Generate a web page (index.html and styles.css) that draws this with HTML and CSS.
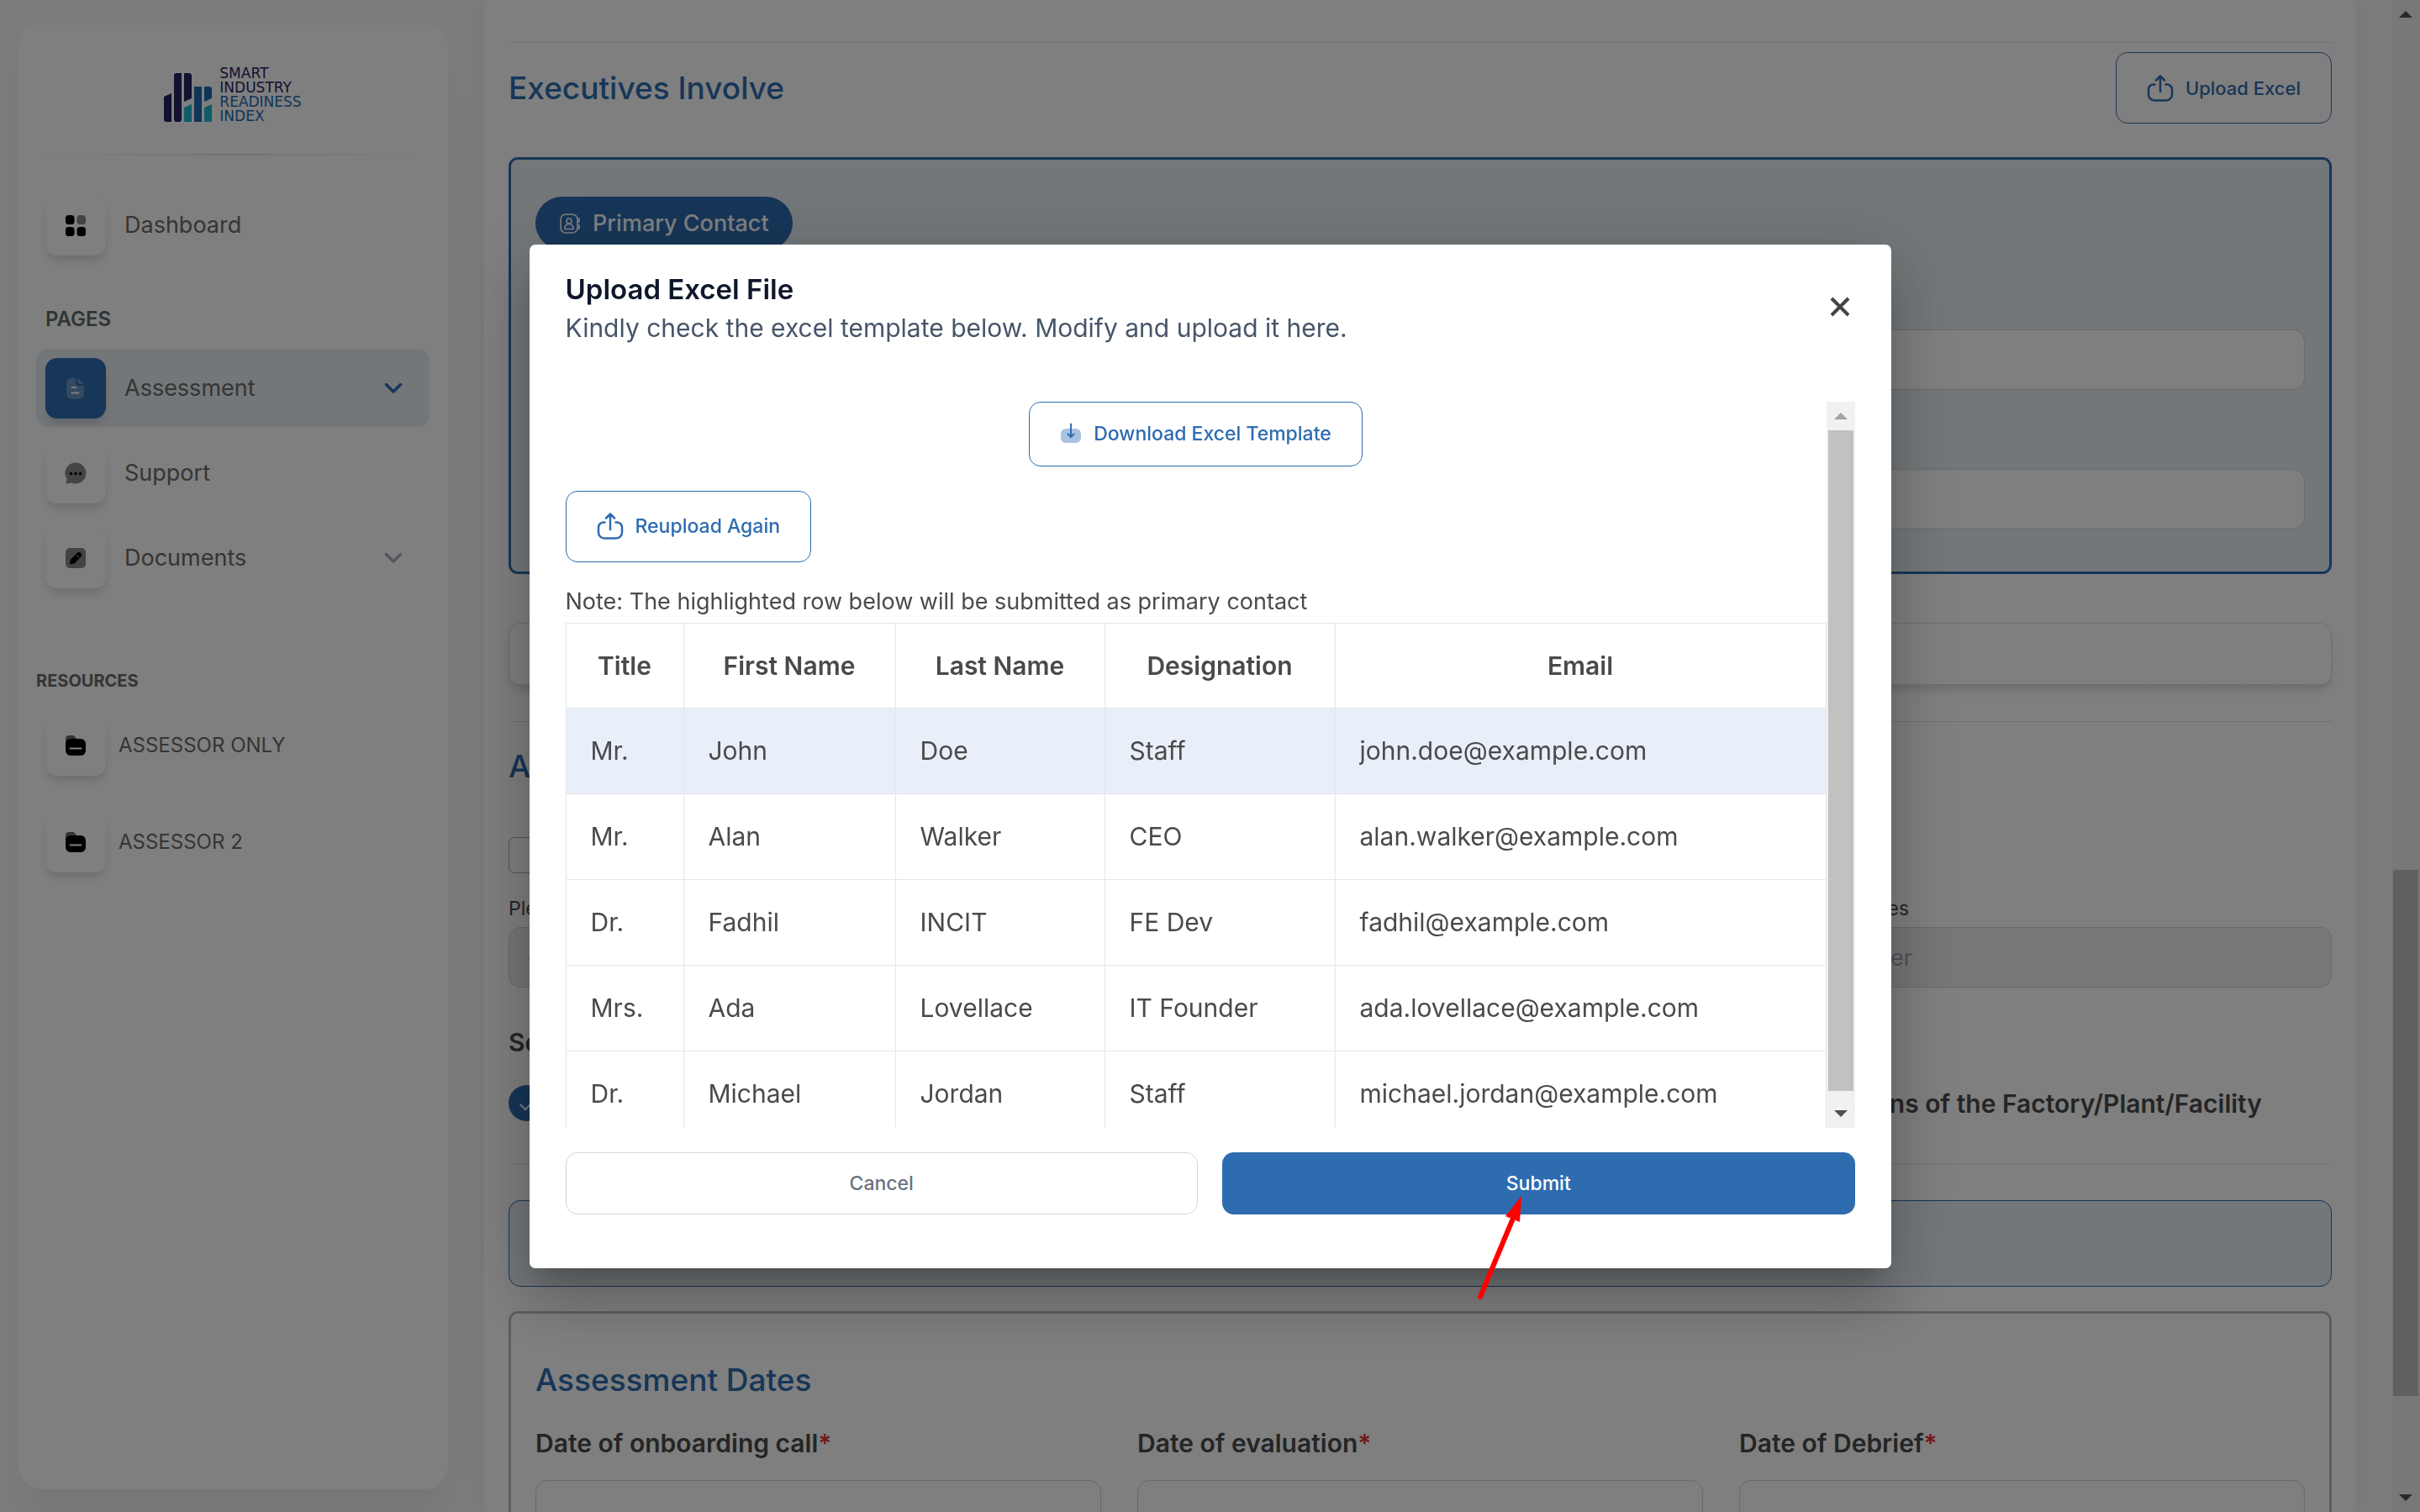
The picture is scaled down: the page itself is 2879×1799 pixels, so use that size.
FILE: index.html
```html
<!DOCTYPE html>
<html lang="en">

<head>
    <meta charset="UTF-8">
    <meta name="viewport" content="width=device-width, initial-scale=1.0">
    <title>Smart Industry Readiness Index - Assessment</title>
    <link rel="stylesheet" href="styles.css">
</head>

<body>
    <!-- shared icons -->
    <svg class="sprite" aria-hidden="true">
        <symbol id="icon-upload" viewBox="0 0 32 32">
            <path d="M9.500 11.500H8a6 6 0 0 0-6 6v6a7 7 0 0 0 7 7h14a7 7 0 0 0 7-7v-6a6 6 0 0 0-6-6h-1.500M16 20V2M11 6.500L16 1.500l5 5" fill="none" stroke="currentColor" stroke-width="2.500" stroke-linecap="round" stroke-linejoin="round"/>
        </symbol>
        <symbol id="icon-chevron" viewBox="0 0 22 14">
            <path d="M2.500 2.500L11 11l8.500-8.500" fill="none" stroke="currentColor" stroke-width="3.500" stroke-linecap="round" stroke-linejoin="round"/>
        </symbol>
        <symbol id="icon-folder" viewBox="0 0 26 26">
            <path d="M1 11V5a4 4 0 0 1 4-4h4.500c2 0 3.500 2 5 5z" fill="#666"/>
            <rect x="1" y="5" width="24" height="20" rx="6"/>
            <path d="M6.500 16.500h13" stroke="#fff" stroke-width="2" stroke-linecap="round"/>
        </symbol>
    </svg>

    <div class="page">
        <aside class="sidebar">
            <a class="logo" href="#">
                <svg class="logo-mark" viewBox="0 0 58 58" aria-hidden="true">
                    <path d="M0 28l9-4v34H3a3 3 0 0 1-3-3zM12 3a3 3 0 0 1 3-3h6v55a3 3 0 0 1-3 3h-3a3 3 0 0 1-3-3zM24 0h6a3 3 0 0 1 3 3v27l-9 4z" fill="#25225f"/>
                    <path d="M36 16h9v42h-9zM48 16h6a3 3 0 0 1 3 3v11l-9 4z" fill="#206ab0"/>
                    <path d="M24 41l9-4v21h-9zM48 41l9-4v21h-9z" fill="#1cb8d4"/>
                </svg>
                <span class="logo-text">SMART<br>INDUSTRY<br><span class="logo-light">READINESS<br>INDEX</span></span>
            </a>
            <hr class="fade-line">

            <nav>
                <a class="nav-item" href="#">
                    <span class="tile"><svg viewBox="0 0 26 26"><rect x="1" y="1" width="10.500" height="11" rx="3.500"/><rect x="14.500" y="1" width="10.500" height="11" rx="3.500" fill="#888"/><rect x="1" y="15" width="10.500" height="11" rx="3.500"/><rect x="14.500" y="15" width="10.500" height="11" rx="3.500"/></svg></span>
                    <span class="nav-text">Dashboard</span>
                </a>
                <h6 class="nav-title">PAGES</h6>
                <a class="nav-item active" href="#">
                    <span class="tile"><svg viewBox="0 0 26 26"><path d="M8 0.500h5V6a4 4 0 0 0 4 4h6v9.500a6 6 0 0 1-6 6H8a6 6 0 0 1-6-6v-13a6 6 0 0 1 6-6z" fill="#6b93c4"/><path d="M15.500 0.500L23 8h-4a3.500 3.500 0 0 1-3.500-3.500z" fill="#6b93c4"/><path d="M8.500 12h5M8.500 18.500h8" stroke="#fff" stroke-width="2" stroke-linecap="round"/></svg></span>
                    <span class="nav-text">Assessment</span>
                    <svg class="chevron"><use href="#icon-chevron"/></svg>
                </a>
                <a class="nav-item" href="#">
                    <span class="tile"><svg viewBox="0 0 26 26"><path d="M13 0.500a12.500 12.500 0 1 1-5 24L1.500 25.500l1-5.500A12.500 12.500 0 0 1 13 0.500z" fill="#888"/><circle cx="7.500" cy="13.500" r="1.700"/><circle cx="13" cy="13.500" r="1.700"/><circle cx="18.500" cy="13.500" r="1.700"/></svg></span>
                    <span class="nav-text">Support</span>
                </a>
                <a class="nav-item" href="#">
                    <span class="tile"><svg viewBox="0 0 26 26"><rect x="1" y="1" width="24" height="24" rx="5" fill="#888"/><path d="M6.500 20l.8-5L15 7.300a2.800 2.800 0 0 1 4 4L11.500 19z" stroke="#000" stroke-linejoin="round"/><path d="M14 9l3.500 3.500" stroke="#888"/></svg></span>
                    <span class="nav-text">Documents</span>
                    <svg class="chevron"><use href="#icon-chevron"/></svg>
                </a>
                <h6 class="nav-title resources">RESOURCES</h6>
                <a class="nav-item resource" href="#">
                    <span class="tile"><svg><use href="#icon-folder"/></svg></span>
                    <span class="nav-text">ASSESSOR ONLY</span>
                </a>
                <a class="nav-item resource" href="#">
                    <span class="tile"><svg><use href="#icon-folder"/></svg></span>
                    <span class="nav-text">ASSESSOR 2</span>
                </a>
            </nav>
        </aside>

        <main class="content">
            <hr>
            <div class="section-head">
                <h2>Executives Involve</h2>
                <button type="button" class="btn btn-outline btn-upload"><svg class="upload"><use href="#icon-upload"/></svg>Upload Excel</button>
            </div>

            <section class="contact-box">
                <span class="pill">
                    <svg viewBox="0 0 26 26" fill="none" stroke="currentColor" stroke-width="1.600" stroke-linecap="round" aria-hidden="true"><rect x="2" y="2" width="20" height="22" rx="6"/><circle cx="12" cy="10" r="3"/><path d="M7 19.500c0-4 2-6 5-6s5 2 5 6zM22 7h2v4h-2M22 15h2v4h-2"/></svg>
                    Primary Contact
                </span>
                <div class="fields">
                    <div class="field"><input type="text" aria-label="Title"></div>
                    <div class="field"><input type="text" aria-label="First name"></div>
                    <div class="field"><input type="text" aria-label="Last name"></div>
                    <div class="field"><input type="text" aria-label="Designation"></div>
                    <div class="field"><input type="text" aria-label="Email"></div>
                    <div class="field"><input type="text" aria-label="Phone"></div>
                </div>
            </section>

            <div class="collapsed-card"></div>
            <hr>

            <h2 class="area-title">Area</h2>
            <input type="checkbox" class="check" aria-label="Multiple sites">
            <div class="fields small-fields">
                <div class="field"><label for="site">Please</label><input id="site" type="text" placeholder="e.g." disabled></div>
                <div class="field"><input type="text" aria-label="Area" disabled></div>
                <div class="field"><label for="staff">No. of Employees</label><input id="staff" type="text" placeholder="Enter number" disabled></div>
            </div>

            <h3 class="select-title">Select</h3>
            <div class="fields options">
                <input type="checkbox" class="round-check" id="functions" checked>
                <label class="option" for="functions">Functions of the Factory/Plant/Facility</label>
            </div>
            <hr>

            <div class="info-box"></div>

            <section class="dates-box">
                <h2>Assessment Dates</h2>
                <div class="fields">
                    <div class="field"><label for="d1">Date of onboarding call<span class="req">*</span></label><input id="d1" type="text"></div>
                    <div class="field"><label for="d2">Date of evaluation<span class="req">*</span></label><input id="d2" type="text"></div>
                    <div class="field"><label for="d3">Date of Debrief<span class="req">*</span></label><input id="d3" type="text"></div>
                </div>
            </section>
        </main>

        <div class="scrollbar page-scroll" aria-hidden="true">
            <span class="arrow up"></span>
            <span class="track"><span class="thumb"></span></span>
            <span class="arrow down"></span>
        </div>
    </div>

    <div class="overlay">
        <div class="modal" role="dialog" aria-modal="true" aria-labelledby="modal-title">
            <header class="modal-head">
                <div>
                    <h1 id="modal-title">Upload Excel File</h1>
                    <p>Kindly check the excel template below. Modify and upload it here.</p>
                </div>
                <button type="button" class="close" aria-label="Close">
                    <svg viewBox="0 0 24 24"><path d="M2 2l20 20M22 2L2 22" stroke="currentColor" stroke-width="4"/></svg>
                </button>
            </header>

            <div class="modal-body">
                <div class="scroll-area">
                    <button type="button" class="btn btn-outline btn-download">
                        <svg class="download" viewBox="0 0 26 26"><rect x="1" y="7" width="24" height="17" rx="6" fill="#a9c2e1"/><path d="M13 1.500v15M9.500 13.500L13 17l3.500-3.500" fill="none" stroke="currentColor" stroke-width="2" stroke-linecap="round" stroke-linejoin="round"/></svg>Download Excel Template
                    </button>
                    <button type="button" class="btn btn-outline btn-upload"><svg class="upload"><use href="#icon-upload"/></svg>Reupload Again</button>
                    <p class="note">Note: The highlighted row below will be submitted as primary contact</p>
                    <table>
                        <colgroup>
                            <col class="col-title"><col class="col-first"><col class="col-last"><col class="col-role"><col>
                        </colgroup>
                        <thead>
                            <tr><th>Title</th><th>First Name</th><th>Last Name</th><th>Designation</th><th>Email</th></tr>
                        </thead>
                        <tbody>
                            <tr class="primary"><td>Mr.</td><td>John</td><td>Doe</td><td>Staff</td><td>john.doe@example.com</td></tr>
                            <tr><td>Mr.</td><td>Alan</td><td>Walker</td><td>CEO</td><td>alan.walker@example.com</td></tr>
                            <tr><td>Dr.</td><td>Fadhil</td><td>INCIT</td><td>FE Dev</td><td>fadhil@example.com</td></tr>
                            <tr><td>Mrs.</td><td>Ada</td><td>Lovellace</td><td>IT Founder</td><td>ada.lovellace@example.com</td></tr>
                            <tr><td>Dr.</td><td>Michael</td><td>Jordan</td><td>Staff</td><td>michael.jordan@example.com</td></tr>
                        </tbody>
                    </table>
                </div>
                <div class="scrollbar modal-scroll" aria-hidden="true">
                    <span class="arrow up"></span>
                    <span class="track"><span class="thumb"></span></span>
                    <span class="arrow down"></span>
                </div>
            </div>

            <footer class="modal-foot">
                <button type="button" class="btn btn-cancel">Cancel</button>
                <div class="submit-wrap">
                    <button type="submit" class="btn btn-submit">Submit</button>
                    <svg class="pointer" viewBox="0 0 60 130" aria-hidden="true">
                        <path d="M6 123L44 32" stroke="#f00" stroke-width="6" stroke-linecap="round"/>
                        <path d="M55 3L36 27l17 7z" fill="#f00"/>
                    </svg>
                </div>
            </footer>
        </div>
    </div>
</body>

</html>
```
FILE: styles.css
```css
:root {
    --primary: #2e6cb0;
    --light: #e7eff3;
    --text: #4a4a4a;
    --line: #e5e7eb;
    font-family: Inter, 'Open Sans', sans-serif;
}
* {
    box-sizing: border-box;
}
body {
    margin: 0;
    height: 100vh;
    overflow: hidden;
    color: var(--text);
    background-color: #f8f9fa;
}
h1, h2, h3, h6, p {
    margin: 0;
}
a {
    color: inherit;
    text-decoration: none;
}
button, input {
    font-family: inherit;
}
.sprite {
    display: none;
}
.page {
    display: flex;
    height: 100vh;
}

/* sidebar */
.sidebar {
    flex: none;
    width: 511px;
    margin: 29px 43px 27px 22px;
    padding: 50px 22px 0 21px;
    border-radius: 29px;
    background-color: #fff;
    box-shadow: 0 37px 50px rgba(0, 20, 10, 0.05);
}
.logo {
    display: flex;
    justify-content: center;
    align-items: flex-end;
    gap: 8px;
    margin-bottom: 36px;
}
.logo-mark {
    width: 58px;
    height: 58px;
    margin-bottom: 2px;
}
.logo-text {
    font-family: 'DejaVu Sans', sans-serif;
    font-size: 17px;
    line-height: 17px;
    color: #25225f;
}
.logo-light {
    color: #206ab0;
}
.fade-line {
    height: 2px;
    margin: 0;
    border: none;
    background: linear-gradient(90deg, transparent, #e4e4e4, transparent);
}
.nav-item {
    display: flex;
    align-items: center;
    gap: 22px;
    height: 93px;
    margin-bottom: 8px;
    padding: 0 32px 0 11px;
    border-radius: 14px;
    font-size: 27px;
    color: #6a6a6a;
}
.nav-item:first-child {
    margin-top: 36px;
}
.nav-item.active {
    background-color: var(--light);
}
.tile {
    display: flex;
    align-items: center;
    justify-content: center;
    width: 72px;
    height: 72px;
    border-radius: 14px;
    background-color: #fff;
    box-shadow: 0 7px 12px -2px rgba(0, 0, 0, 0.16);
}
.tile svg {
    width: 26px;
    height: 26px;
}
.active .tile {
    background-color: var(--primary);
}
.nav-text {
    flex: 1;
}
.chevron {
    width: 22px;
    height: 14px;
    color: #a5adba;
}
.active .chevron {
    color: var(--primary);
}
.nav-title {
    margin: 51px 0 21px 11px;
    font-size: 24px;
    line-height: 29px;
    font-weight: 600;
    color: #606a6c;
}
.nav-title.resources {
    margin: 86px 0 15px 0;
    font-size: 20px;
    font-weight: 700;
    color: #6a6a6a;
}
.nav-item.resource {
    gap: 15px;
    margin-bottom: 22px;
    font-size: 24px;
}

/* page content */
.content {
    flex: 1;
    min-width: 0;
    height: 100vh;
    margin-right: 42px;
    padding: 50px 29px 0;
    overflow: hidden;
    background-color: #fff;
    box-shadow: 0 0 36px rgba(0, 0, 0, 0.06);
}
.content hr {
    height: 1px;
    margin: 0;
    border: none;
    background-color: #e2e2e2;
}
.content h2 {
    font-size: 37px;
    line-height: 54px;
    font-weight: 500;
    color: var(--primary);
}
.section-head {
    display: flex;
    align-items: center;
    justify-content: space-between;
    margin: 11px 0 40px;
}
.btn {
    display: flex;
    align-items: center;
    justify-content: center;
    gap: 14px;
    height: 74px;
    border: 1px solid var(--line);
    border-radius: 14px;
    font-size: 22px;
    font-weight: 500;
    background-color: #fff;
    cursor: pointer;
}
.btn-outline {
    padding: 0 36px;
    border-color: var(--primary);
    color: var(--primary);
}
.btn-upload {
    height: 85px;
}
.upload {
    width: 32px;
    height: 32px;
}
.contact-box {
    padding: 44px 29px 50px;
    border: 3px solid var(--primary);
    border-radius: 11px;
    background-color: var(--light);
}
.pill {
    display: flex;
    align-items: center;
    gap: 14px;
    width: fit-content;
    height: 63px;
    padding: 0 28px;
    border-radius: 32px;
    font-size: 27px;
    font-weight: 500;
    color: #fff;
    background-color: var(--primary);
}
.pill svg {
    width: 26px;
    height: 26px;
}
.fields {
    display: grid;
    grid-template-columns: repeat(3, 1fr);
    align-items: end;
    gap: 43px;
}
.contact-box .fields {
    row-gap: 94px;
    margin-top: 95px;
}
.field label {
    display: block;
    margin-bottom: 8px;
    font-size: 30px;
    line-height: 42px;
    font-weight: 600;
}
.field input {
    display: block;
    width: 100%;
    height: 72px;
    padding: 0 22px;
    border: 1px solid #d2d2d2;
    border-radius: 14px;
    font-size: 27px;
    background-color: #fff;
}
.field input:disabled {
    background-color: #eee;
}
.field input::placeholder {
    color: #9ca3af;
}
.collapsed-card {
    height: 74px;
    margin: 58px 0 43px;
    border: 1px dotted #bbb;
    border-radius: 14px;
    box-shadow: 0 7px 12px -2px rgba(0, 0, 0, 0.16);
}
.area-title {
    margin: 26px 0 57px;
}
.check, .round-check {
    display: block;
    appearance: none;
    width: 43px;
    height: 43px;
    margin: 0;
    border: 1px solid #aaa;
    border-radius: 7px;
}
.small-fields {
    margin-top: 25px;
}
.small-fields .field label {
    margin-bottom: 5px;
    font-size: 23px;
    line-height: 34px;
    font-weight: 400;
}
.select-title {
    margin: 44px 0 30px;
    font-size: 30px;
    line-height: 42px;
    font-weight: 600;
}
.options {
    align-items: center;
    margin-bottom: 50px;
}
.option {
    grid-column: 2 / 4;
    justify-self: end;
    padding-right: 83px;
    font-size: 30px;
    font-weight: 600;
}
.round-check {
    position: relative;
    border: none;
    border-radius: 50%;
    background-color: var(--primary);
}
.round-check::after {
    content: '';
    position: absolute;
    left: 14px;
    top: 16px;
    width: 15px;
    height: 8px;
    border-left: 2px solid #fff;
    border-bottom: 2px solid #fff;
    transform: rotate(-45deg);
}
.info-box {
    height: 103px;
    margin: 43px 0 29px;
    border: 1px solid var(--primary);
    border-radius: 14px;
    background-color: var(--light);
}
.dates-box {
    height: 400px;
    padding: 52px 29px;
    border: 3px solid #bdbdbd;
    border-radius: 11px;
}
.dates-box .fields {
    margin-top: 27px;
}
.dates-box .field label {
    margin-bottom: 23px;
}
.req {
    color: #e53238;
}

/* scrollbars */
.scrollbar {
    flex: none;
    display: flex;
    flex-direction: column;
    width: 34px;
    background-color: #f1f1f1;
}
.scrollbar .track {
    flex: 1;
    padding: 0 2px;
}
.scrollbar .thumb {
    display: block;
    height: 100%;
    background-color: #c1c1c1;
}
.page-scroll .track {
    padding-top: 1001px;
}
.page-scroll .thumb {
    height: 626px;
}
.arrow {
    display: flex;
    align-items: center;
    justify-content: center;
    height: 34px;
}
.arrow::before {
    content: '';
    border: 8px solid transparent;
}
.arrow.up::before {
    border-top: none;
    border-bottom-color: #505050;
}
.arrow.down::before {
    border-bottom: none;
    border-top-color: #505050;
}
.modal-scroll .track {
    padding-bottom: 10px;
}
.modal-scroll .arrow.up::before {
    border-bottom-color: #a3a3a3;
}

/* modal */
.overlay {
    position: fixed;
    inset: 0;
    display: flex;
    align-items: center;
    justify-content: center;
    background-color: rgba(0, 0, 0, 0.5);
}
.modal {
    width: 1620px;
    max-width: 90%;
    padding: 32px 43px 64px;
    border-radius: 7px;
    background-color: #fff;
    box-shadow: 0 20px 27px -13px rgba(0, 0, 0, 0.2),
                0 44px 69px 5px rgba(0, 0, 0, 0.14),
                0 16px 84px 14px rgba(0, 0, 0, 0.12);
}
.modal .btn {
    font-size: 23px;
}
.modal-head {
    display: flex;
    align-items: flex-start;
    justify-content: space-between;
    margin-bottom: 64px;
}
.modal-head h1 {
    font-size: 33px;
    line-height: 43px;
    font-weight: 600;
    color: #0f172a;
}
.modal-head p {
    font-size: 30px;
    line-height: 48px;
    color: #475569;
}
.close {
    display: flex;
    margin-top: 24px;
    padding: 6px;
    border: none;
    background: none;
    color: #444;
    cursor: pointer;
}
.close svg {
    width: 24px;
    height: 24px;
}
.modal-body {
    display: flex;
    height: 864px;
    max-height: 60vh;
}
.scroll-area {
    flex: 1;
    overflow: hidden;
}
.btn-download {
    height: 77px;
    margin: 0 auto 29px;
}
.download {
    width: 26px;
    height: 26px;
}
.note {
    margin: 25px 0 4px;
    font-size: 27px;
    line-height: 43px;
}
table {
    width: 100%;
    table-layout: fixed;
    border-collapse: collapse;
    font-size: 30px;
}
.col-title {
    width: 140px;
}
.col-first {
    width: 252px;
}
.col-last {
    width: 249px;
}
.col-role {
    width: 274px;
}
th, td {
    height: 102px;
    padding: 0 29px;
    border: 1px solid var(--line);
    text-align: left;
}
th {
    height: 101px;
    padding: 0;
    text-align: center;
    font-weight: 600;
}
.primary {
    background-color: #e8eff8;
}
.modal-foot {
    display: grid;
    grid-template-columns: 1fr 1fr;
    gap: 29px;
    margin-top: 29px;
}
.btn-cancel {
    border-color: #d1d5db;
    color: #6b7280;
}
.submit-wrap {
    position: relative;
}
.btn-submit {
    width: 100%;
    border: none;
    color: #fff;
    background-color: var(--primary);
}
.pointer {
    position: absolute;
    left: 40%;
    top: 49px;
    width: 60px;
    height: 130px;
}
```
